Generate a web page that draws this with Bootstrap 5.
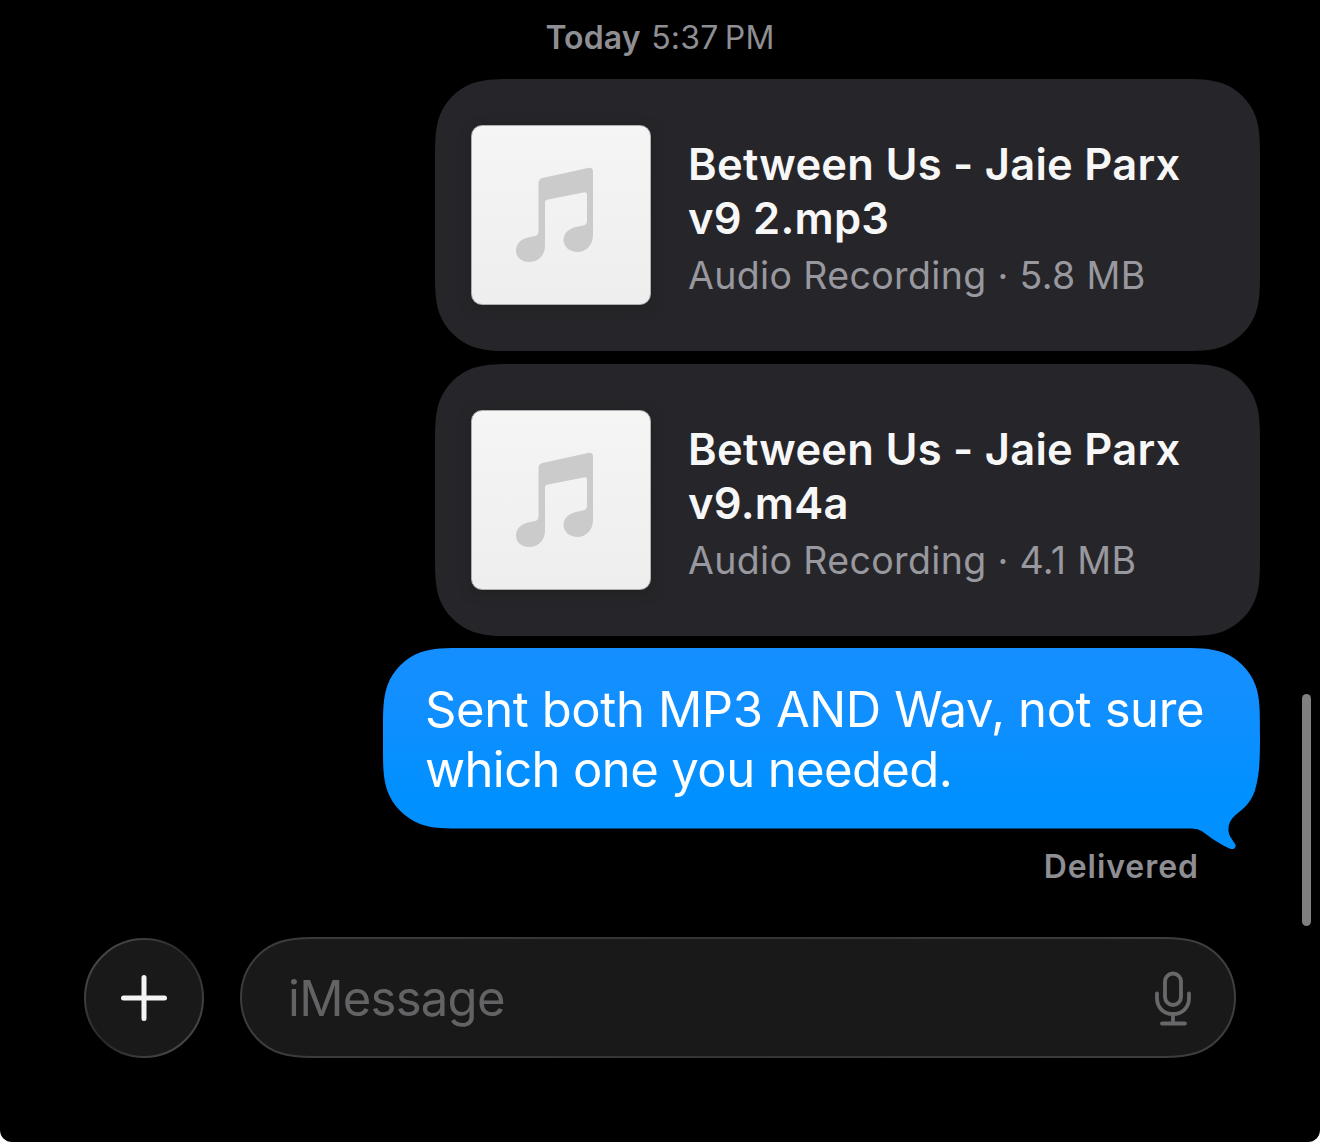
<!DOCTYPE html>
<html lang="en" data-bs-theme="dark">
<head>
<meta charset="utf-8">
<meta name="viewport" content="width=device-width, initial-scale=1">
<title>Messages</title>
<link href="https://cdn.jsdelivr.net/npm/bootstrap@5.3.0/dist/css/bootstrap.min.css" rel="stylesheet">
<style>
html{background:#fff}
body{background:#fff;font-family:Inter,"Liberation Sans",sans-serif;font-kerning:normal}
.screen{width:1320px;height:1142px;background:#000;border-radius:0 0 12px 12px;padding-top:18px}
.stamp{font-size:32px;line-height:40px;color:#8e8e93;height:61px;white-space:nowrap}
.stamp .day{font-weight:560;letter-spacing:.1px}
.stamp .hour{letter-spacing:.25px;margin-left:10.500px}
.thread{padding-right:60px}
.file-bubble{width:825px;height:272px;margin-bottom:13px;background:#26262a;padding-left:36px;
clip-path:path("M84 0H741C763 0 775 0 788 4.6C802.5 10 815 22.5 820.4 37C825 50 825 62 825 84V188C825 210 825 222 820.4 235C815 249.5 802.5 262 788 267.4C775 272 763 272 741 272H84C62 272 50 272 37 267.4C22.5 262 10 249.5 4.6 235C0 222 0 210 0 188V84C0 62 0 50 4.6 37C10 22.5 22.5 10 37 4.6C50 0 62 0 84 0Z")}
.cover{width:180px;height:180px;margin-top:46px;border-radius:11px;border:1px solid #aeaeb0;background:linear-gradient(#f5f5f5,#eee);box-shadow:0 3px 12px rgba(30,30,28,.55)}
.info{margin:58px 0 0 37px;white-space:nowrap}
.file-name{font-size:43.5px;line-height:54px;font-weight:600;color:#f7f7f8;letter-spacing:.25px}
.file-kind{font-size:37.5px;line-height:46px;margin-top:8px;color:#98989e;letter-spacing:.36px}
.sent-bubble{width:877px;height:201px;margin-top:-1px;padding:32px 0 0 42px;color:#fff;font-size:49px;line-height:60px;letter-spacing:-.6px;white-space:nowrap;
background:linear-gradient(#158fff 0,#128fff 55px,#0090ff 150px);
clip-path:path("M84 0H793C815 0 827 0 840 4.6C854.5 10 867 22.5 872.4 37C877 50 877 62 877 88C877 112 876.6 127 871.8 143C867 156 860 161 852 167.5C844.5 174 843.5 184 848.5 190.5Q850.5 194 852.5 196.5Q853.3 201.3 848 201Q844 200.2 830 191.3L819 183.2Q815 180.500 809 180.500H84C62 180.500 50 180.500 37 175.9C22.5 170.500 10 158 4.6 143.500C0 130.500 0 118.500 0 96.500V84C0 62 0 50 4.6 37C10 22.5 22.5 10 37 4.6C50 0 62 0 84 0Z")}
.sent-bubble .first-line{letter-spacing:-.4px}
.status{margin:-2px 61px 0 0;font-size:32px;line-height:40px;font-weight:560;color:#8e8e93;letter-spacing:.95px}
.composer{margin-top:50px;padding-left:84px;gap:36px}
.field{width:996px;height:120px}
.field-text{padding:3px 0 0 48px;font-size:49px;line-height:60px;color:#636366;letter-spacing:-.72px}
.scroller{left:1302px;top:694px;width:9px;height:232px;background:#7f7f7f}
</style>
<script src="https://cdn.jsdelivr.net/npm/bootstrap@5.3.0/dist/js/bootstrap.bundle.min.js"></script>
</head>
<body class="overflow-hidden">
<svg width="0" height="0" class="position-absolute" aria-hidden="true">
<symbol id="note" viewBox="0 0 178 178"><path fill="#cbcbcb" d="M66.500 57Q66.500 53 70.500 52L116 42Q121 41 121 46V109C121 119 114 126 105.500 126C98 126 91.500 121 91.500 114C91.500 107 97 102.500 104 101L111 99.500Q115 98.700 115 95V69Q115 65.700 111.500 66.500L76 73.500Q73 74.200 73 76.500V120C73 129 66.500 136 57 136C50 136 44 131.500 44 124.500C44 118 49 113 56 111.500L63 110Q66.500 109.300 66.500 105Z"/></symbol>
</svg>
<main class="screen position-relative d-flex flex-column">
<div class="stamp d-flex justify-content-center"><span class="day">Today</span><span class="hour">5:37&#8201;PM</span></div>
<section class="thread d-flex flex-column align-items-end">
<article class="file-bubble d-flex align-items-start">
<div class="cover flex-shrink-0"><svg class="d-block" width="178" height="178"><use href="#note"/></svg></div>
<div class="info"><div class="file-name">Between Us - Jaie Parx<br>v9 2.mp3</div><div class="file-kind">Audio Recording · 5.8 MB</div></div>
</article>
<article class="file-bubble d-flex align-items-start">
<div class="cover flex-shrink-0"><svg class="d-block" width="178" height="178"><use href="#note"/></svg></div>
<div class="info"><div class="file-name">Between Us - Jaie Parx<br>v9.m4a</div><div class="file-kind">Audio Recording · 4.1 MB</div></div>
</article>
<article class="sent-bubble"><span class="first-line">Sent both MP3 AND Wav, not sure</span><br>which one you needed.</article>
<div class="status">Delivered</div>
</section>
<footer class="composer d-flex">
<svg width="120" height="121" viewBox="0 0 120 121" role="img" aria-label="Add">
<defs><linearGradient id="rim" x1="0" y1="0" x2="1" y2="1"><stop offset=".12" stop-color="#484848"/><stop offset=".5" stop-color="#282828"/><stop offset=".88" stop-color="#484848"/></linearGradient></defs>
<circle cx="60" cy="61" r="59" fill="#191919" stroke="url(#rim)" stroke-width="2"/>
<path d="M60 40.500V81.500M39.500 61H80.500" stroke="#f5f4f5" stroke-width="5" stroke-linecap="round"/>
</svg>
<div class="field position-relative d-flex align-items-center justify-content-between">
<svg class="position-absolute top-0 start-0" width="996" height="121" viewBox="0 0 996 121" aria-hidden="true">
<defs><linearGradient id="rim2" gradientUnits="userSpaceOnUse" x1="0" y1="0" x2="996" y2="0"><stop offset="0" stop-color="#3c3c3c"/><stop offset=".5" stop-color="#343434"/><stop offset="1" stop-color="#3e3e3e"/></linearGradient></defs>
<path d="M1 60.500C1 43 7 29.600 18.300 18.300C30.500 6.100 46 1 72 1H924C950 1 965.500 6.100 977.700 18.300C989 29.600 995 43 995 60.500C995 78 989 91.400 977.700 102.700C965.500 114.900 950 120 924 120H72C46 120 30.500 114.900 18.300 102.700C7 91.400 1 78 1 60.500Z" fill="#191919" stroke="url(#rim2)" stroke-width="2"/>
</svg>
<div class="field-text position-relative">iMessage</div>
<svg class="position-relative" width="106" height="120" viewBox="0 0 106 120" fill="none" stroke="#66686a" stroke-width="3.800" stroke-linecap="round" role="img" aria-label="Dictate">
<rect x="35" y="36.500" width="16" height="31.500" rx="8"/><path d="M27 56.500V61C27 70.500 33.500 77 43 77S59 70.500 59 61V56.500M43 77V86.500M32 86.500H55"/>
</svg>
</div>
</footer>
<div class="scroller position-absolute rounded-pill"></div>
</main>
</body>
</html>
